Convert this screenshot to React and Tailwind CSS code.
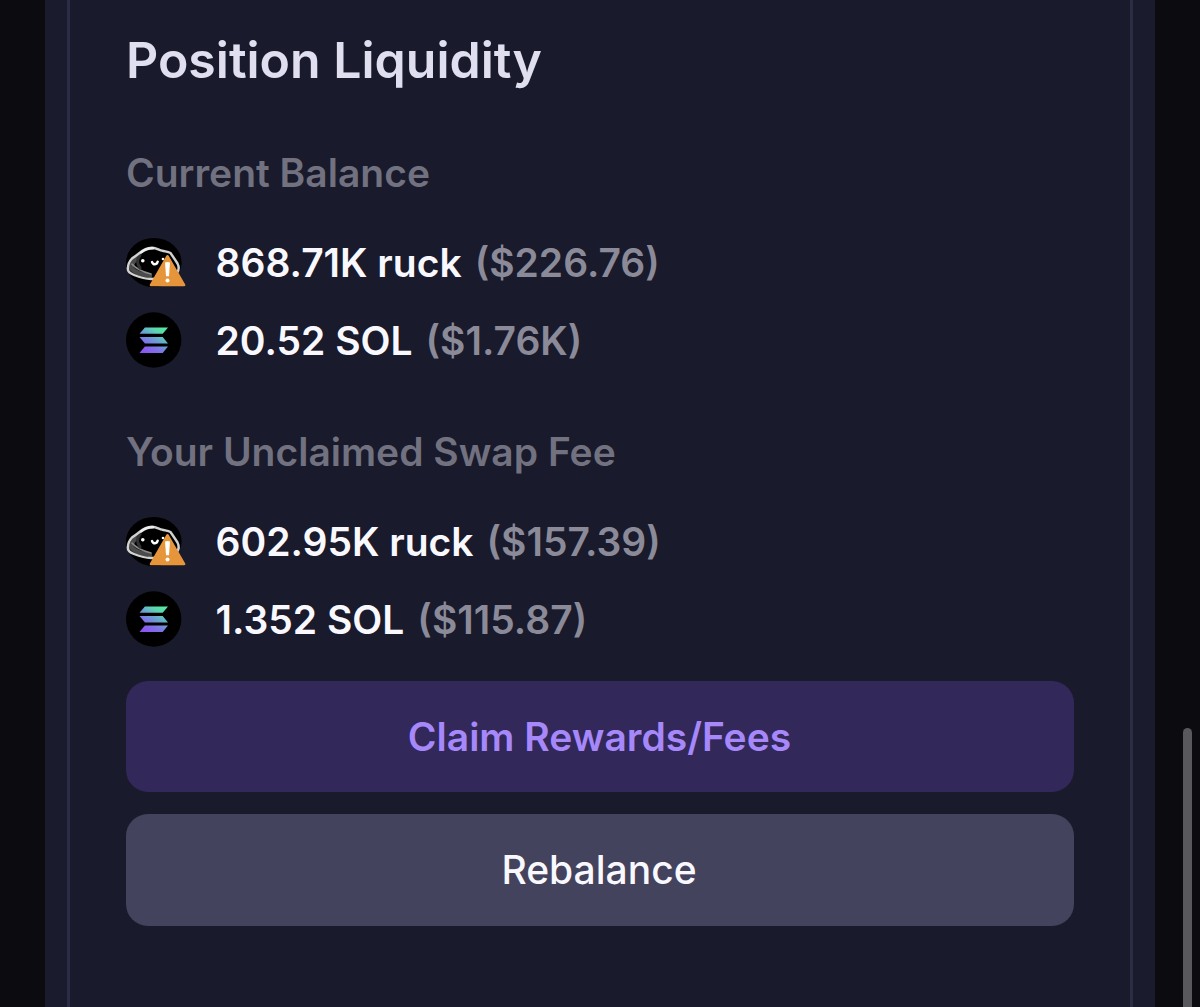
import React from 'react';

const balances = [
    { token: 'ruck', amount: '868.71K ruck', usd: '($226.76)' },
    { token: 'sol', amount: '20.52 SOL', usd: '($1.76K)' },
];

const fees = [
    { token: 'ruck', amount: '602.95K ruck', usd: '($157.39)' },
    { token: 'sol', amount: '1.352 SOL', usd: '($115.87)' },
];

const SolIcon = () => (
    <svg viewBox="0 0 56 56" className="w-14 h-14">
        <defs>
            <linearGradient id="sol" gradientUnits="userSpaceOnUse" x1="18" y1="42" x2="36" y2="13">
                <stop offset="0" stopColor="#9050f5" />
                <stop offset="0.3" stopColor="#8070e8" />
                <stop offset="0.55" stopColor="#68a4d0" />
                <stop offset="0.75" stopColor="#5cd4b4" />
                <stop offset="1" stopColor="#54ee9c" />
            </linearGradient>
        </defs>
        <circle cx="27.7" cy="28" r="27.7" fill="#000" />
        <g fill="url(#sol)">
            <path d="M18.9 15.6H42L36.7 21.8H13.5Z" />
            <path d="M13.5 24.9H36.7L42 31.4H18.9Z" />
            <path d="M18.9 34.4H42L36.7 40.9H13.5Z" />
        </g>
    </svg>
);

const RuckIcon = () => (
    <svg viewBox="0 0 60 49" className="w-15 h-[49px]">
        <defs>
            <filter id="soft" x="-10%" y="-10%" width="120%" height="120%">
                <feGaussianBlur stdDeviation="0.7" />
            </filter>
        </defs>
        <ellipse cx="27.8" cy="24.5" rx="27.8" ry="24.5" fill="#000" />
        <g filter="url(#soft)" fill="none" strokeLinecap="round" strokeLinejoin="round">
            <path d="M11 20C7 23 5.5 27 5 30C9 35 16 37 24 38" stroke="#4c4c4c" strokeWidth="4.5" />
            <path d="M6 26C10 31 17 34 25 36" stroke="#8a8a8a" strokeWidth="1.6" />
            <path d="M14 17C11 21 11 26 14 30" stroke="#333" strokeWidth="3" />
            <path
                d="M1.8 30.5C2 27 3.5 23 6 20.5C8.5 18.5 10.5 17.5 13.5 15C17 12 21 10 26 9.8C30 10 33 11.8 36 12.6C39 13.5 42 13.8 44.5 15C46.5 18 49 21.5 51.5 25.5C53 28.5 53.2 32 51 35C44 40 35 41 25 41C19 41 13 39 8 37C4 35.5 1.6 33.5 1.8 30.5Z"
                stroke="#d2d2d2"
                strokeWidth="2.4"
            />
            <path d="M15 14.5C19 11.5 23 10.2 27 10.3" stroke="#eee" strokeWidth="2.4" />
            <circle cx="16.8" cy="22.8" r="1.8" fill="#fff" />
            <path d="M26 24C27.3 27.3 31 27 31.7 23.6" stroke="#fff" strokeWidth="2.4" />
            <circle cx="37" cy="21" r="1.3" fill="#fff" />
        </g>
        {/* Warning badge */}
        <path d="M41.5 18.2L58.2 47H24.9Z" fill="#e6953b" stroke="#e6953b" strokeWidth="2.4" strokeLinejoin="round" />
        <path d="M39 24.6Q41.5 23.2 44 24.6L43 38.3H40Z" fill="#fff" />
        <circle cx="41.5" cy="42.6" r="2" fill="#fff" />
    </svg>
);

const TokenRow = ({ token, amount, usd }) => (
    <div className="flex items-center">
        <div className="w-[89.5px] shrink-0">
            {token === 'sol' ? <SolIcon /> : <RuckIcon />}
        </div>
        <p className="flex gap-[13px] text-[39px] leading-[49px] font-semibold text-[#f9f8ff] whitespace-nowrap">
            <span>{amount}</span>
            <span className="text-[#8b8a98]">{usd}</span>
        </p>
    </div>
);

const BalanceSection = ({ title, rows }) => (
    <section>
        <h3 className="text-[39px] leading-[56px] font-semibold text-[#717180]">{title}</h3>
        <div className="flex flex-col gap-[25px] mt-[37px]">
            {rows.map((row) => (
                <TokenRow key={row.token} {...row} />
            ))}
        </div>
    </section>
);

const App = () => {
    return (
        <div className="h-[1007px] bg-[#0c0b10] flex overflow-hidden font-['Inter',sans-serif]">
            <main className="ml-[45px] w-[1110px] px-[22px] bg-[#1b1b2e] shrink-0">
                <div className="h-full border-x-[3px] border-[#2d2c45] bg-[#191a2b] px-14 pt-[25px]">
                    <h2 className="text-[50px] leading-[70px] font-semibold text-[#e0dfef]">Position Liquidity</h2>
                    <div className="mt-[50px] flex flex-col gap-14">
                        <BalanceSection title="Current Balance" rows={balances} />
                        <BalanceSection title="Your Unclaimed Swap Fee" rows={fees} />
                    </div>
                    <div className="mt-[34px] flex flex-col gap-[22px]">
                        <button className="h-[111px] pt-0.5 pr-px rounded-[22px] bg-[#322859] text-[39px] font-semibold text-[#a688fa]">
                            Claim Rewards/Fees
                        </button>
                        <button className="h-[112px] pt-px pr-0.5 rounded-[22px] bg-[#44435d] text-[39px] font-medium text-[#f9f8ff]">
                            Rebalance
                        </button>
                    </div>
                </div>
            </main>
            {/* Scrollbar */}
            <div className="ml-7 mt-[728px] w-[9px] h-[300px] rounded-full bg-[#59585c] shrink-0" />
        </div>
    );
};

export default App;
